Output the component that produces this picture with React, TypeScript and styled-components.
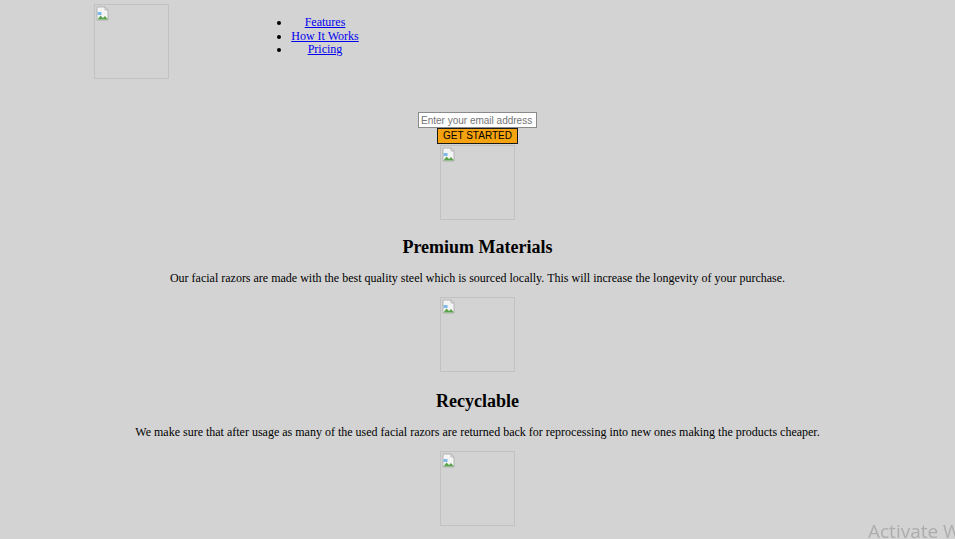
import React from "react";
import styled, { createGlobalStyle } from "styled-components";

const Global = createGlobalStyle`
  html, body {
    margin: 0;
    padding: 0;
    background: #d3d3d3;
    font-family: "Liberation Serif", "Times New Roman", serif;
    color: #000;
  }
  body { overflow: hidden; }
`;

const Header = styled.header`
  display: flex;
  align-items: flex-start;
  padding: 4px 0 0 94px;
`;

const ImgBox = styled.div`
  position: relative;
  width: 73px;
  height: 73px;
  border: 1px solid #c2c2c2;
  flex: none;
`;

const BrokenIcon = styled.svg`
  position: absolute;
  left: 1px;
  top: 1px;
`;

const NavList = styled.ul`
  margin: 12px 0 0 122px;
  padding: 0;
  font-size: 12px;
  line-height: 13.5px;
`;

const NavItem = styled.li`
  list-style: disc outside;
  text-align: center;
  width: 68px;
  margin-left: 0;
`;

const NavLink = styled.a`
  color: #0000ee;
  text-decoration: underline;
`;

const Main = styled.main`
  display: flex;
  flex-direction: column;
  align-items: center;
  padding-top: 33px;
`;

const EmailInput = styled.input`
  box-sizing: border-box;
  width: 119px;
  height: 16px;
  margin: 0;
  padding: 0 2px;
  border: 1px solid #8a8a8a;
  background: #fff;
  font-family: "Liberation Sans", Arial, sans-serif;
  font-size: 10px;
  &::placeholder { color: #757575; }
`;

const CTA = styled.button`
  box-sizing: border-box;
  width: 81px;
  height: 16px;
  margin: 0 0 1px;
  padding: 0;
  background: #f4a20f;
  border: 1.5px solid #1a1a1a;
  font-family: "Liberation Sans", Arial, sans-serif;
  font-size: 10px;
  line-height: 12px;
  color: #000;
`;

const Feature = styled.section`
  display: flex;
  flex-direction: column;
  align-items: center;
`;

const Title = styled.h2<{ $first?: boolean }>`
  margin: ${(p) => (p.$first ? "17px" : "19px")} 0 0;
  font-size: 18px;
  line-height: 21px;
  font-weight: bold;
`;

const Text = styled.p`
  margin: 13px 0 12px;
  font-size: 12px;
  line-height: 14px;
  text-align: center;
`;

const Watermark = styled.div`
  position: fixed;
  left: 868px;
  top: 518px;
  white-space: nowrap;
  font-family: "Open Sans", "DejaVu Sans", sans-serif;
  font-size: 19px;
  color: rgba(160, 160, 160, 0.75);
  pointer-events: none;
`;

const Broken = () => (
  <BrokenIcon width="14" height="16" viewBox="0 0 14 16">
    <path d="M1 1h8l3 3v10H1z" fill="#f4f4f4" stroke="#a9a9a9" strokeWidth="0.8" />
    <path d="M9 1v3h3" fill="none" stroke="#a9a9a9" strokeWidth="0.8" />
    <path d="M1.5 13.5l3-4 2.5 2.5 2-2 3 3.5z" fill="#5aa34a" />
    <rect x="1.5" y="6" width="4" height="3" fill="#7cb9e8" />
  </BrokenIcon>
);

const Picture = () => (
  <ImgBox>
    <Broken />
  </ImgBox>
);

const features = [
  {
    title: "Premium Materials",
    text: "Our facial razors are made with the best quality steel which is sourced locally. This will increase the longevity of your purchase.",
  },
  {
    title: "Recyclable",
    text: "We make sure that after usage as many of the used facial razors are returned back for reprocessing into new ones making the products cheaper.",
  },
  {
    title: "Fast Shipping",
    text: "We ship everywhere in the country within a few days of your order.",
  },
];

export default function App() {
  return (
    <>
      <Global />
      <Header>
        <Picture />
        <NavList>
          <NavItem><NavLink href="#features">Features</NavLink></NavItem>
          <NavItem><NavLink href="#how-it-works">How It Works</NavLink></NavItem>
          <NavItem><NavLink href="#pricing">Pricing</NavLink></NavItem>
        </NavList>
      </Header>
      <Main>
        <EmailInput type="email" placeholder="Enter your email address" />
        <CTA type="button">GET STARTED</CTA>
        {features.map((f, i) => (
          <Feature key={f.title}>
            <Picture />
            <Title $first={i === 0}>{f.title}</Title>
            <Text>{f.text}</Text>
          </Feature>
        ))}
      </Main>
      <Watermark>Activate Windows</Watermark>
    </>
  );
}
